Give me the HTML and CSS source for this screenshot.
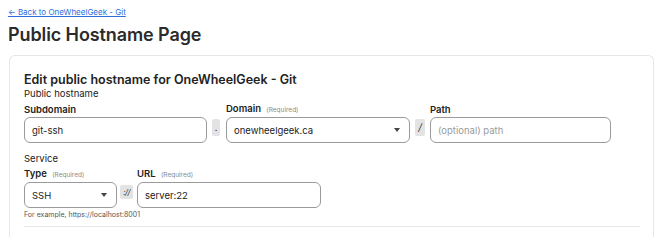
FILE: index.html
```html
<!DOCTYPE html>
<html lang="en">
<head>
    <meta charset="UTF-8">
    <title>Public Hostname Page</title>
    <link rel="stylesheet" href="styles.css">
</head>
<body>
    <a class="back-link" href="#">&larr; Back to OneWheelGeek - Git</a>
    <h1>Public Hostname Page</h1>

    <div class="card">
        <h2>Edit public hostname for OneWheelGeek - Git</h2>

        <div class="section-title">Public hostname</div>
        <div class="field-row">
            <div class="field field-subdomain">
                <label>Subdomain</label>
                <input type="text" value="git-ssh">
            </div>
            <div class="sep">.</div>
            <div class="field field-domain">
                <label>Domain <small>(Required)</small></label>
                <div class="select">onewheelgeek.ca<span class="caret"></span></div>
            </div>
            <div class="sep sep-slash">/</div>
            <div class="field field-path">
                <label>Path</label>
                <input type="text" placeholder="(optional) path">
            </div>
        </div>

        <div class="section-title service">Service</div>
        <div class="field-row">
            <div class="field field-type">
                <label>Type <small>(Required)</small></label>
                <div class="select">SSH<span class="caret"></span></div>
            </div>
            <div class="sep sep-proto">://</div>
            <div class="field field-url">
                <label>URL <small>(Required)</small></label>
                <input type="text" value="server:22">
            </div>
        </div>
        <div class="hint">For example, https://localhost:8001</div>

        <hr>
    </div>
</body>
</html>
```

FILE: styles.css
```css
body {
    font-family: Inter, 'Liberation Sans', sans-serif;
    margin: 0;
    padding: 6px 8px 0 9px;
    background: #fff;
    color: #222;
}
.back-link {
    display: block;
    font-size: 8px;
    color: #2f6fdc;
    text-decoration: underline;
    margin-left: -1px;
    line-height: 12px;
}
h1 {
    margin: 5px 0 8px -1px;
    font-size: 18px;
    font-weight: 600;
    line-height: 24px;
    color: #2b2b2b;
    letter-spacing: -0.1px;
}
.card {
    width: 614px;
    border: 1px solid #e6e6e6;
    border-bottom: none;
    border-radius: 6px 6px 0 0;
    padding: 16px 15px 0 14px;
}
.card h2 {
    margin: 0;
    font-size: 12.5px;
    font-weight: 600;
    line-height: 16px;
    color: #222;
}
.section-title {
    font-size: 9.5px;
    line-height: 14px;
    margin-top: -1px;
    color: #222;
}
.section-title.service {
    margin-top: 9px;
}
.field-row {
    display: flex;
    align-items: flex-end;
}
.field label {
    display: block;
    font-size: 9.5px;
    font-weight: 600;
    line-height: 14px;
    margin: 1px 0 0;
    color: #222;
}
.field label small {
    font-size: 6.5px;
    font-weight: 400;
    color: #8a8a8a;
    margin-left: 3px;
}
.field input,
.select {
    box-sizing: border-box;
    height: 26px;
    border: 1px solid #9a9a9a;
    border-radius: 6px;
    padding: 0 7px;
    font-family: inherit;
    font-size: 9.5px;
    color: #222;
    background: #fff;
    display: block;
    width: 100%;
    outline: none;
}
.field input::placeholder {
    color: #9a9a9a;
}
.select {
    display: flex;
    align-items: center;
    justify-content: space-between;
    padding-right: 9px;
}
.caret {
    width: 0;
    height: 0;
    border-left: 3px solid transparent;
    border-right: 3px solid transparent;
    border-top: 4px solid #444;
}
.field-subdomain { width: 183px; }
.field-domain { width: 184px; }
.field-path { width: 181px; }
.field-type { width: 93px; }
.field-url { width: 184px; }
.sep {
    box-sizing: border-box;
    width: 8px;
    height: 17px;
    margin: 0 6px 7px 5px;
    background: #e3e3e3;
    border-radius: 2px;
    font-size: 9px;
    color: #333;
    text-align: center;
    line-height: 17px;
}
.sep-slash {
    width: 10px;
    margin: 0 5px 7px 5px;
    font-style: italic;
    font-size: 10px;
}
.sep-proto {
    width: 13px;
    height: 14px;
    line-height: 14px;
    margin: 0 4px 9px 3px;
    font-size: 8px;
    font-style: italic;
    letter-spacing: -0.5px;
}
.hint {
    font-size: 7px;
    color: #555;
    margin-top: 2px;
    line-height: 10px;
}
hr {
    border: none;
    border-top: 1px solid #e6e6e6;
    margin: 6px 0 0;
    width: 616px;
    padding-bottom: 10px;
}
```
